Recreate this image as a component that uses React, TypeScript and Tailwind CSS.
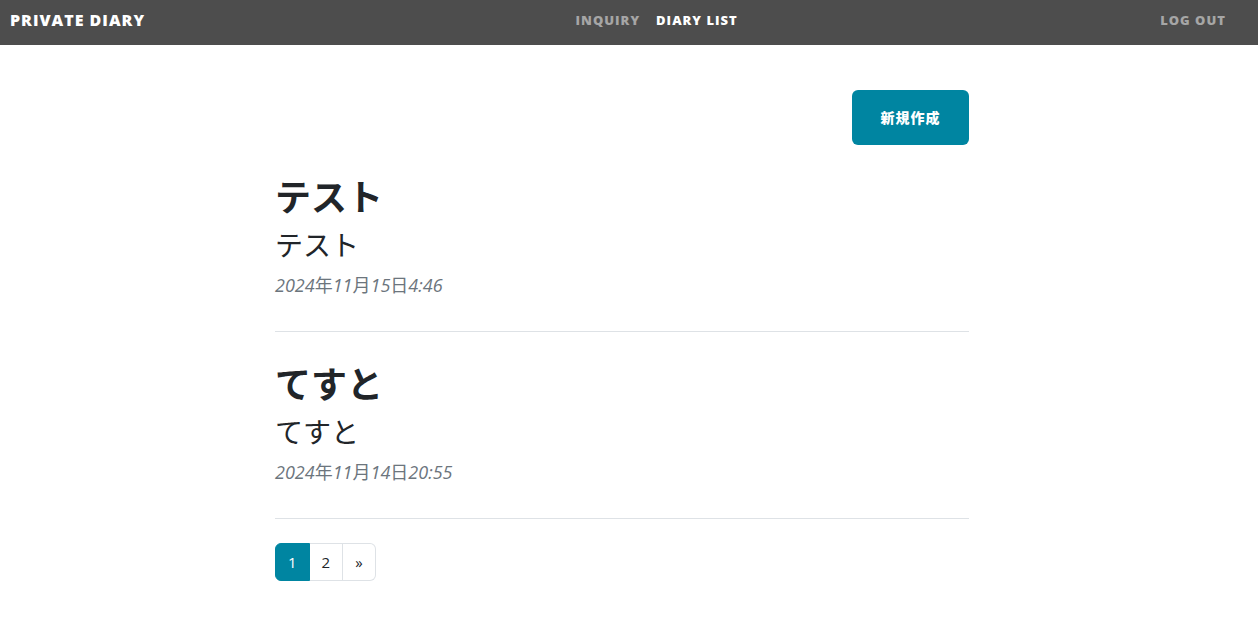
type Entry = { title: string; subtitle: string; date: string };

const entries: Entry[] = [
  { title: 'テスト', subtitle: 'テスト', date: '2024年11月15日4:46' },
  { title: 'てすと', subtitle: 'てすと', date: '2024年11月14日20:55' },
];

function NavBar() {
  return (
    <nav className="flex h-[45px] items-center justify-between bg-[#4d4d4d] pb-[5px] pr-8 pl-[10px] text-[13px] leading-5 font-extrabold tracking-[1px] text-white/50 uppercase">
      <a href="#home" className="mr-2 text-[16px] text-white">Private Diary</a>
      <div className="flex gap-4">
        <a href="#inquiry">Inquiry</a>
        <a href="#list" className="text-white">Diary List</a>
      </div>
      <a href="#logout">Log Out</a>
    </nav>
  );
}

function DiaryDate({ value }: { value: string }) {
  return (
    <p className="mt-[6px] text-[18px] leading-7 font-normal text-[#6c757d] italic">
      {value.split(/([年月日])/).map((part, i) =>
        i % 2 === 1 ? <span key={i} className="not-italic">{part}</span> : part
      )}
    </p>
  );
}

function DiaryEntry({ title, subtitle, date }: Entry) {
  return (
    <article className="border-b border-[#dee2e6] pb-8">
      <a href="#entry" className="block">
        <h2 className="text-[36px] leading-[42px] font-bold">{title}</h2>
        <h3 className="mt-[6px] text-[28px] leading-10 font-normal">{subtitle}</h3>
      </a>
      <DiaryDate value={date} />
    </article>
  );
}

export default function App() {
  return (
    <div className="min-h-screen bg-white font-['Open_Sans','Noto_Sans_CJK_JP',sans-serif] text-[#212529]" lang="ja">
      <NavBar />
      <div className="pt-[45px] pr-[14px]">
        <main className="mx-auto max-w-[694px]">
          <div className="flex justify-end">
            <button type="button" className="h-[55px] min-w-[117px] rounded-md bg-[#0085a1] px-7 text-[14px] font-extrabold tracking-[1px] text-white">新規作成</button>
          </div>
          <div className="mt-8 flex flex-col gap-8">
            {entries.map((e) => <DiaryEntry key={e.title} {...e} />)}
          </div>
          <nav aria-label="Pages" className="mt-6 flex text-[15px] leading-6">
            <a href="#1" aria-current="page" className="rounded-l-md border border-[#0085a1] bg-[#0085a1] px-3 py-[6px] text-white">1</a>
            <a href="#2" className="border-y border-r border-[#dee2e6] px-3 py-[6px]">2</a>
            <a href="#next" aria-label="Next" className="rounded-r-md border-y border-r border-[#dee2e6] px-3 py-[6px]">»</a>
          </nav>
        </main>
      </div>
    </div>
  );
}
